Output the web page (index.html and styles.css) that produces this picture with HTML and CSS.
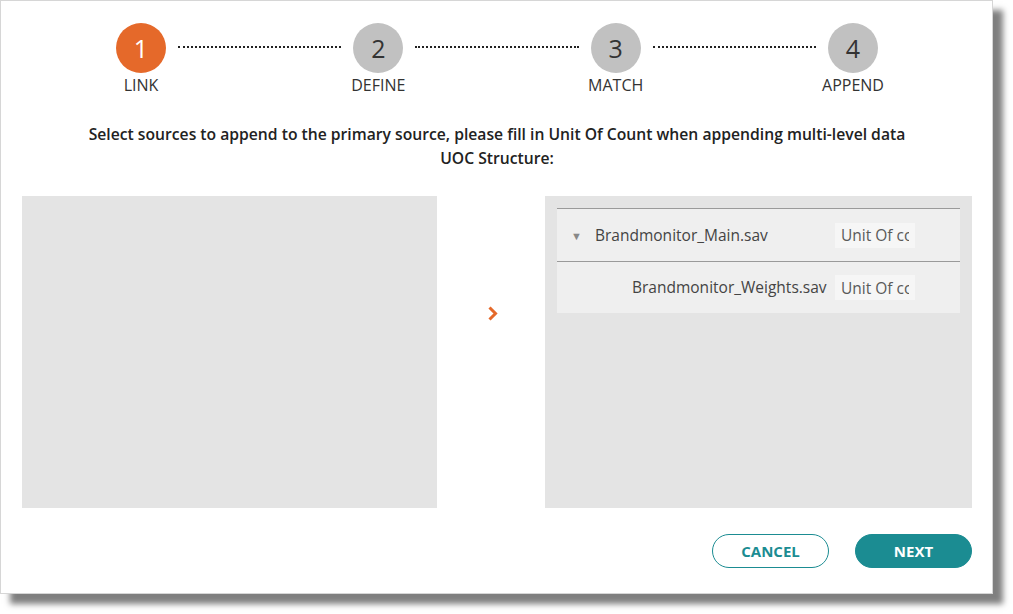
FILE: index.html
```html
<!DOCTYPE html>
<html lang="en">
<head>
  <meta charset="UTF-8" />
  <title>Append Sources</title>
  <link rel="stylesheet" href="styles.css">
</head>
<body>
  <div class="dialog">
    <div class="stepper">
      <div class="step active">
        <div class="circle">1</div>
        <div class="label">LINK</div>
      </div>
      <div class="connector"></div>
      <div class="step">
        <div class="circle">2</div>
        <div class="label">DEFINE</div>
      </div>
      <div class="connector"></div>
      <div class="step">
        <div class="circle">3</div>
        <div class="label">MATCH</div>
      </div>
      <div class="connector"></div>
      <div class="step">
        <div class="circle">4</div>
        <div class="label">APPEND</div>
      </div>
    </div>

    <p class="intro">
      Select sources to append to the primary source, please fill in Unit Of Count when appending multi-level data<br>
      UOC Structure:
    </p>

    <div class="panels">
      <div class="panel source-list"></div>
      <div class="move">
        <svg width="12" height="16" viewBox="0 0 12 16">
          <polyline points="2.5,1.5 8.5,7.5 2.5,13.5" fill="none" stroke="#e5692a" stroke-width="3" />
        </svg>
      </div>
      <div class="panel tree">
        <div class="tree-row">
          <span class="toggle">&#9660;</span>
          <span class="name">Brandmonitor_Main.sav</span>
          <input type="text" class="uoc" placeholder="Unit Of count">
        </div>
        <div class="tree-row child">
          <span class="toggle"></span>
          <span class="name">Brandmonitor_Weights.sav</span>
          <input type="text" class="uoc" placeholder="Unit Of count">
        </div>
      </div>
    </div>

    <div class="actions">
      <button class="btn btn-outline">CANCEL</button>
      <button class="btn btn-primary">NEXT</button>
    </div>
  </div>
</body>
</html>
```

FILE: styles.css
```css
* {
  box-sizing: border-box;
}

body {
  margin: 0;
  min-height: 614px;
  background: #fff;
  font-family: "Open Sans", Arial, sans-serif;
  color: #333;
}

.dialog {
  width: 993px;
  height: 594px;
  border: 1px solid #d6d6d6;
  background: #fff;
  box-shadow: 10px 10px 6px rgba(0, 0, 0, 0.5);
  padding: 22px 20px 0 21px;
}

/* stepper */
.stepper {
  display: flex;
  width: 762px;
  margin: 0 auto;
}

.step {
  width: 50px;
  display: flex;
  flex-direction: column;
  align-items: center;
}

.circle {
  width: 50px;
  height: 50px;
  border-radius: 50%;
  background: #c1c1c1;
  color: #333;
  font-size: 25px;
  line-height: 50px;
  text-align: center;
}

.step.active .circle {
  background: #e5692a;
  color: #fff;
}

.label {
  margin-top: 2px;
  font-size: 16px;
  line-height: 20px;
  white-space: nowrap;
  color: #333;
}

.connector {
  flex: 1;
  height: 2px;
  margin: 23px 12px 0;
  border-top: 2px dotted #222;
}

.intro {
  margin: 27px 0 26px;
  text-align: center;
  font-size: 15.7px;
  font-weight: 600;
  line-height: 24px;
  color: #222;
}

/* panels */
.panels {
  display: flex;
  height: 312px;
}

.panel {
  background: #e4e4e4;
}

.source-list {
  width: 415px;
}

.move {
  flex: 1;
  display: flex;
  justify-content: center;
  align-items: flex-start;
  padding: 110px 0 0 4px;
}

.tree {
  width: 427px;
  padding: 12px;
}

.tree-row {
  display: flex;
  align-items: center;
  height: 53px;
  background: #efefef;
  border-top: 1px solid #9a9a9a;
}

.tree-row.child {
  height: 52px;
}

.toggle {
  width: 38px;
  padding-left: 14px;
  font-size: 11px;
  color: #888;
}

.name {
  width: 240px;
  font-size: 15.5px;
  color: #444;
  white-space: nowrap;
  margin-top: -1px;
}

.child .name {
  padding-left: 37px;
}

.uoc {
  width: 80px;
  height: 25px;
  border: none;
  background: #f6f6f6;
  padding: 0 6px;
  font-family: inherit;
  font-size: 15.5px;
  color: #555;
}

.uoc::placeholder {
  color: #5a5a5a;
}

/* buttons */
.actions {
  display: flex;
  justify-content: flex-end;
  gap: 26px;
  margin-top: 26px;
}

.btn {
  width: 117px;
  height: 34px;
  border-radius: 17px;
  font-family: inherit;
  font-size: 15px;
  font-weight: 700;
  cursor: pointer;
}

.btn-outline {
  background: #fff;
  border: 1px solid #1b8c92;
  color: #1b8c92;
}

.btn-primary {
  background: #1b8c92;
  border: 1px solid #1b8c92;
  color: #fff;
}
```
